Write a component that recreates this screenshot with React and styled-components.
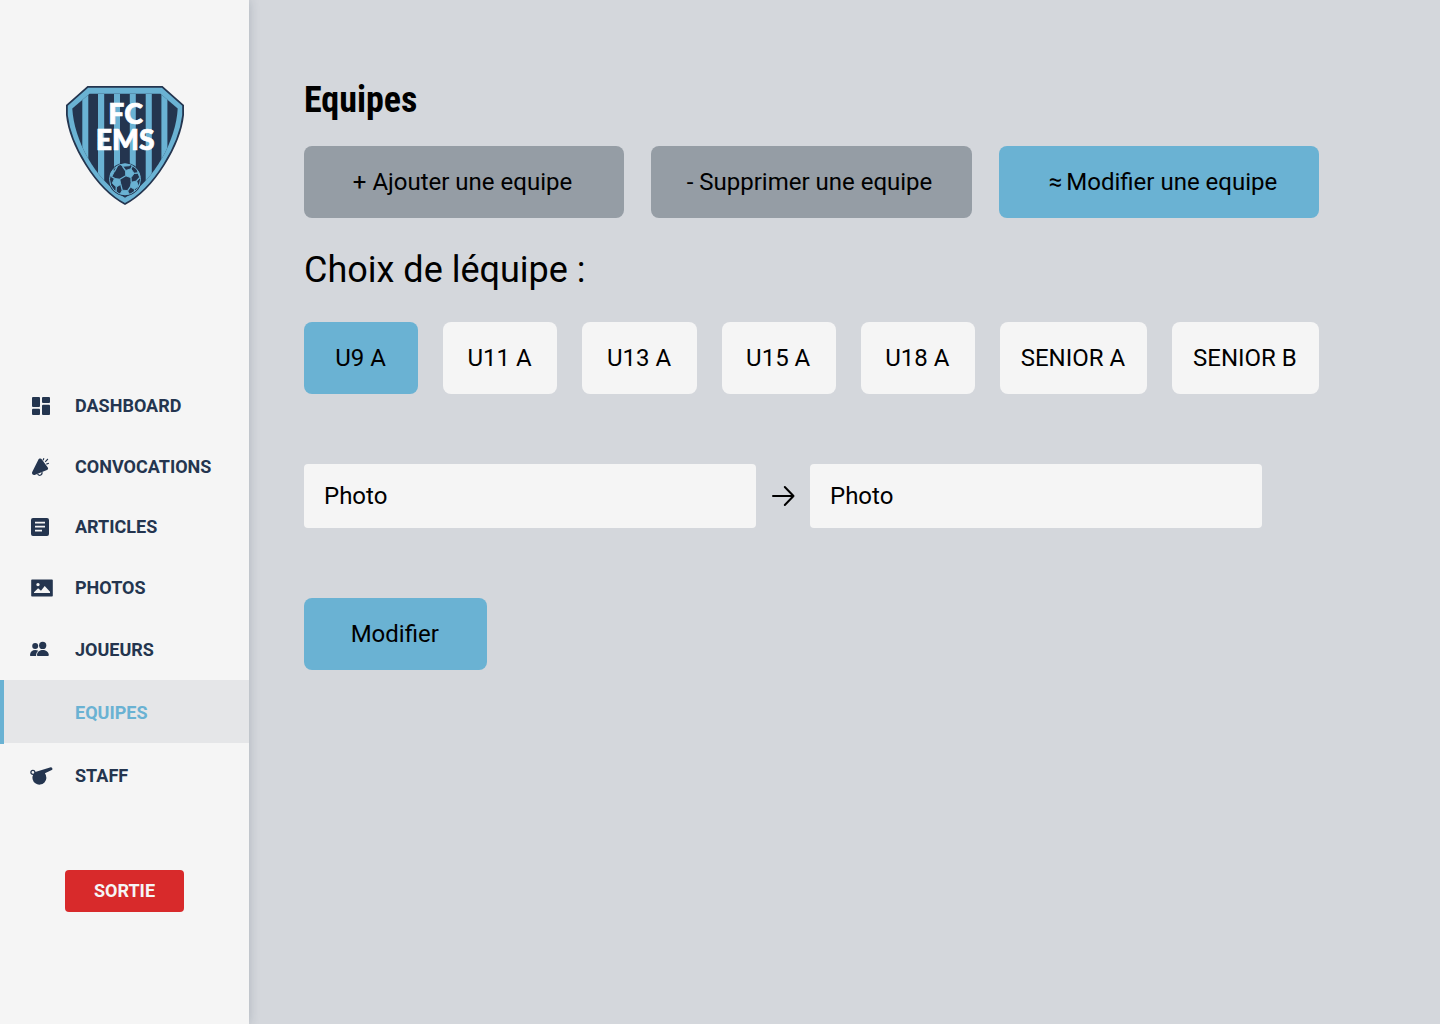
import React from "react";
import styled, { createGlobalStyle } from "styled-components";

const navy = "#24354f";
const sky = "#6ab2d3";
const paper = "#f5f5f5";

const GlobalStyle = createGlobalStyle`
  * { box-sizing: border-box; }
  body { margin: 0; background: #d4d7dc; font-family: Roboto, "Liberation Sans", sans-serif; color: #000; }
  button, input { font-family: inherit; color: inherit; }
`;

const Page = styled.div`
  display: flex;
  width: 1440px;
  height: 1024px;
  overflow: hidden;
  background: #d4d7dc;
`;

const Sidebar = styled.aside`
  width: 249px;
  flex: none;
  display: flex;
  flex-direction: column;
  padding-top: 86px;
  background: ${paper};
  box-shadow: 0 0 10px rgba(36, 53, 79, 0.22);
`;

const Crest = styled.svg`
  width: 120px;
  height: 120px;
  margin-left: 65px;
  flex: none;
`;

const Nav = styled.nav`
  width: 100%;
  margin-top: 169px;
  display: flex;
  flex-direction: column;
`;

const NavItem = styled.a`
  height: ${(p) => p.$h}px;
  display: flex;
  align-items: center;
  padding-left: 26px;
  border-left: 4px solid ${(p) => (p.$active ? sky : "transparent")};
  background: ${(p) => (p.$active ? "linear-gradient(#e5e6e8, #e5e6e8) 0 0 / 100% 63px no-repeat" : "transparent")};
  color: ${(p) => (p.$active ? sky : navy)};
  font-size: 18px;
  font-weight: 700;
  line-height: 21px;
`;

const NavIcon = styled.svg`
  width: 24px;
  height: 24px;
  margin-right: 21px;
  flex: none;
  fill: ${navy};
`;

const Label = styled.span`
  padding-bottom: ${(p) => p.$lift || 0}px;
`;

const Exit = styled.button`
  width: 119px;
  height: 42px;
  margin: 62.6px 0 0 65px;
  padding: 0 0 1px;
  border: 0;
  border-radius: 4px;
  background: #d82a2b;
  color: ${paper};
  font-size: 18px;
  font-weight: 700;
`;

const Main = styled.main`
  width: 1070px;
  padding: 79px 0 0 55px;
`;

const Title = styled.h1`
  margin: 0;
  font-family: "Roboto Condensed", Roboto, sans-serif;
  font-stretch: 75%;
  font-size: 36px;
  font-weight: 700;
  line-height: 42px;
`;

const Subtitle = styled.h2`
  margin: 31px 0;
  font-size: 36px;
  font-weight: 400;
  line-height: 42px;
`;

const Row = styled.div`
  display: flex;
  justify-content: space-between;
`;

const Actions = styled(Row)`
  margin-top: 25px;
`;

const Button = styled.button`
  width: ${(p) => p.$w}px;
  height: 72px;
  padding: 0 ${(p) => p.$right || 0}px 0 ${(p) => p.$left || 0}px;
  border: 0;
  border-radius: 8px;
  background: ${(p) => p.$bg};
  font-size: 24px;
  white-space: nowrap;
`;

const Approx = styled.span`
  margin-right: 4px;
`;

const Swap = styled.div`
  display: flex;
  align-items: center;
  margin: 70px 0;
`;

const Field = styled.div`
  width: 452px;
  height: 64px;
  display: flex;
  align-items: center;
  padding-left: 20px;
  border-radius: 4px;
  background: ${paper};
  font-size: 24px;
`;

const Arrow = styled.svg`
  width: 24px;
  height: 24px;
  margin: 0 15px;
  flex: none;
  fill: none;
  stroke: #000;
  stroke-width: 2;
  stroke-linecap: round;
  stroke-linejoin: round;
`;

const icons = {
  DASHBOARD: (
    <>
      <rect x="2" y="3" width="8" height="10" rx="1" />
      <rect x="2" y="14.7" width="8" height="6.3" rx="1" />
      <rect x="12" y="3" width="8" height="6" rx="1" />
      <rect x="12" y="10.8" width="8" height="10.2" rx="1" />
    </>
  ),
  CONVOCATIONS: (
    <>
      <path d="M8.2 5C9 3.3 10.9 3.1 11.9 4.5L17.8 12.4C18.4 13.4 18.1 14.5 17 14.9L4.6 20C3 20.4 1.6 18.6 2.1 17.2Z" />
      <path d="M7.8 18.8C8.2 21.2 12.5 20.8 12 17.2" fill="none" stroke={navy} strokeWidth="1.2" />
      <path d="M13.1 5.3L13.9 3.2M15.2 6.8L17.9 4M16.3 9.1L18.9 8.3" fill="none" stroke={navy} strokeWidth="1.1" />
    </>
  ),
  ARTICLES: (
    <path fillRule="evenodd" d="M3 3H17Q19 3 19 5V19Q19 21 17 21H3Q1 21 1 19V5Q1 3 3 3ZM5 6.8V8.6H15V6.8ZM5 10.8V12.6H15V10.8ZM5 14.8V16.6H12V14.8Z" />
  ),
  PHOTOS: (
    <path fillRule="evenodd" d="M2 3.5H22Q22.8 3.5 22.8 4.3V19.7Q22.8 20.5 22 20.5H2Q1.2 20.5 1.2 19.7V4.3Q1.2 3.5 2 3.5ZM8 6.9A1.7 1.7 0 1 0 8 10.3A1.7 1.7 0 1 0 8 6.9M4 17H20V15.7L14.7 10L11 14.7L8.1 12.2L4 16.2Z" />
  ),
  JOUEURS: (
    <>
      <circle cx="5.2" cy="8.9" r="3" />
      <circle cx="12.7" cy="8.4" r="3.6" />
      <path d="M6.1 19H1C.3 19 0 18.7 0 18C.2 14.8 2.5 13 5.2 13C6.4 13 7.5 13.2 8.3 13.7C6.8 14.9 6 16.7 6.1 19Z" />
      <path d="M7.8 19Q7 19 7 18.1C7.2 14.9 9.9 13.1 12.8 13.1S18.5 14.9 18.8 18.1Q18.8 19 17.9 19Z" />
    </>
  ),
  STAFF: (
    <>
      <path d="M5.2 8.1L20.8 3.2Q22.8 3.2 22.3 5.8L14.9 9.3A7 7 0 1 1 3.2 10.4Z" />
      <circle cx="2.9" cy="8.4" r="2" fill={paper} stroke={navy} strokeWidth="1.3" />
    </>
  ),
};

const navItems = [
  ["DASHBOARD", 61],
  ["CONVOCATIONS", 61],
  ["ARTICLES", 60, 2],
  ["PHOTOS", 61],
  ["JOUEURS", 62],
  ["EQUIPES", 64],
  ["STAFF", 63],
];

const teams = ["U9 A", "U11 A", "U13 A", "U15 A", "U18 A", "SENIOR A", "SENIOR B"];

const inner = "M24.5 7.7H95.5L112.7 22.5C111 54 90 94 60 111.7C30 94 9 54 7.3 22.5Z";

const FCCrest = () => (
  <Crest viewBox="0 0 120 120">
    <defs>
      <clipPath id="field">
        <path d={inner} />
      </clipPath>
      <clipPath id="ball">
        <circle cx="60" cy="93.3" r="15.6" />
      </clipPath>
    </defs>
    <path d="M22.8 .9H97.2L118.1 19.3V29C115 58 90 102 60 118C30 102 5 58 1.9 29V19.3Z" fill={sky} stroke={navy} strokeWidth="1.8" />
    <path d={inner} fill={navy} />
    <path clipPath="url(#field)" fill={sky} d="M17.3 8H23.3V110H17.3ZM33 8H39.2V110H33ZM49 8H55V110H49ZM64.8 8H70.8V110H64.8ZM80.7 8H86.8V110H80.7ZM96.4 8H102.4V110H96.4Z" />
    <circle cx="60" cy="93.3" r="16.6" fill={navy} />
    <g clipPath="url(#ball)" fill={sky} stroke={sky} strokeWidth=".9" strokeLinejoin="round">
      <path d="M60.5 84.5L66 82.8L69.2 87.4L66 91.7L60.7 89.8Z" />
      <path d="M49.5 92.4L54.8 93.2L55.8 98.4L51.3 101L47.3 97.2Z" />
      <path d="M66.2 96.2L71.5 95L73.5 99.8L69.4 103.3L65.3 101Z" />
      <path d="M57.2 104.2L62.7 104.6L64.5 110H54Z" />
      <path d="M53 76H67L64.5 79.7L57.5 80.3Z" />
      <path d="M73 82L77 88L74.8 91.5L72.8 87Z" />
      <path d="M43 88L47.3 83.5L49.4 85.6L46.7 90.8Z" />
      <path fill="none" strokeWidth="1.3" d="M60.7 89.8L54.8 93.2M66 91.7L66.2 96.2M69.2 87.4L72.8 87M60.5 84.5L57.5 80.3M66 82.8L68 78.5M55.8 98.4L57.2 104.2M65.3 101L62.7 104.6M49.5 92.4L46.7 90.8M49.4 85.6L52.4 80M71.5 95L74.8 91.5M51.3 101L51 106M69.4 103.3L70 106" />
    </g>
    <circle cx="60" cy="93.3" r="15.5" fill="none" stroke={sky} strokeWidth="1" />
    <text fill="#fff" stroke="#fff" strokeWidth=".7" fontFamily="Lato, sans-serif" fontWeight="900" fontSize="28.4" textAnchor="middle">
      <tspan x="60.6" y="37.7">FC</tspan>
      <tspan x="60.2" y="64.4">EMS</tspan>
    </text>
  </Crest>
);

export default function App() {
  return (
    <Page>
      <GlobalStyle />
      <Sidebar>
        <FCCrest />
        <Nav>
          {navItems.map(([name, h, lift]) => (
            <NavItem key={name} $h={h} $active={name === "EQUIPES"}>
              <NavIcon viewBox="0 0 24 24">{icons[name]}</NavIcon>
              <Label $lift={lift}>{name}</Label>
            </NavItem>
          ))}
        </Nav>
        <Exit>SORTIE</Exit>
      </Sidebar>
      <Main>
        <Title>Equipes</Title>
        <Actions>
          <Button $w={320} $bg="#959da5" $right={3}>+ Ajouter une equipe</Button>
          <Button $w={320.5} $bg="#959da5" $right={4}>- Supprimer une equipe</Button>
          <Button $w={320} $bg={sky} $left={8}><Approx>≈</Approx>Modifier une equipe</Button>
        </Actions>
        <Subtitle>Choix de léquipe :</Subtitle>
        <Row>
          {teams.map((t, i) => (
            <Button key={t} $w={i < 5 ? 114.2 : 147} $bg={i ? paper : sky} $right={i === 1 ? 1.6 : 1}>{t}</Button>
          ))}
        </Row>
        <Swap>
          <Field>Photo</Field>
          <Arrow viewBox="0 0 24 24"><path d="M2 12H22.5M13.8 3L22.5 12L13.8 21" /></Arrow>
          <Field>Photo</Field>
        </Swap>
        <Button $w={183} $bg={sky} $right={1.5}>Modifier</Button>
      </Main>
    </Page>
  );
}
